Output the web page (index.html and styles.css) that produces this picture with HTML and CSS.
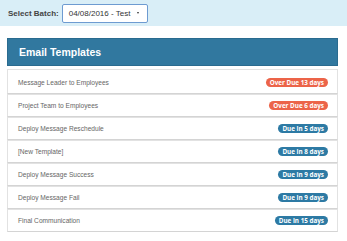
FILE: index.html
```html
<!DOCTYPE html>
<html>
<head>
    <title>Email Templates</title>
    <link rel="stylesheet" href="styles.css">
</head>
<body>
    <div class="topbar">
        <label class="batch-label">Select Batch:</label>
        <div class="select">
            <span>04/08/2016 - Test</span>
            <span class="caret"></span>
        </div>
    </div>

    <div class="panel">
        <div class="panel-heading">Email Templates</div>
        <ul class="list">
            <li><span>Message Leader to Employees</span><span class="badge over">Over Due 13 days</span></li>
            <li><span>Project Team to Employees</span><span class="badge over">Over Due 6 days</span></li>
            <li><span>Deploy Message Reschedule</span><span class="badge due">Due in 5 days</span></li>
            <li><span>[New Template]</span><span class="badge due">Due in 8 days</span></li>
            <li><span>Deploy Message Success</span><span class="badge due">Due in 9 days</span></li>
            <li><span>Deploy Message Fail</span><span class="badge due">Due in 9 days</span></li>
            <li><span>Final Communication</span><span class="badge due">Due in 15 days</span></li>
        </ul>
    </div>
</body>
</html>
```

FILE: styles.css
```css
body { margin: 0; font-family: "Liberation Sans", Arial, sans-serif; background: #fff; color: #555; }
.topbar { height: 26px; background: #d9eef7; display: flex; align-items: center; padding-left: 8px; }
.batch-label { font-size: 8px; font-weight: bold; color: #444; margin-right: 3px; }
.select { width: 72px; height: 17px; border: 1px solid #6d9bd1; border-radius: 2px; background: #fff; display: flex; align-items: center; justify-content: space-between; padding: 0 6px; font-size: 8px; color: #333; white-space: nowrap; }
.caret { width: 0; height: 0; border-left: 1.5px solid transparent; border-right: 1.5px solid transparent; border-top: 2.5px solid #333; margin-right: 2px; }
.panel { margin: 12px 9px 0 7px; }
.panel-heading { height: 26px; background: #31789f; color: #fff; font-weight: bold; font-size: 10.5px; display: flex; align-items: center; padding-left: 11px; border: 1px solid #2a6b8f; }
.list { list-style: none; margin: 3px 0 0; padding: 0; }
.list li { height: 21px; border: 1px solid #e2e2e2; border-bottom-color: #d4d4d4; display: flex; align-items: center; justify-content: space-between; padding: 0 9px 0 10px; font-size: 6.6px; color: #666; }
.list li:first-child { height: 23px; padding-top: 2px; box-sizing: border-box; height: 25px; }
.badge { font-family: "Open Sans", sans-serif; font-weight: bold; font-size: 6.3px; color: #fff; border-radius: 5px; padding: 1px 4px; line-height: 7px; white-space: nowrap; }
.over { background: #ec6449; }
.due { background: #2d7aa4; }
```
